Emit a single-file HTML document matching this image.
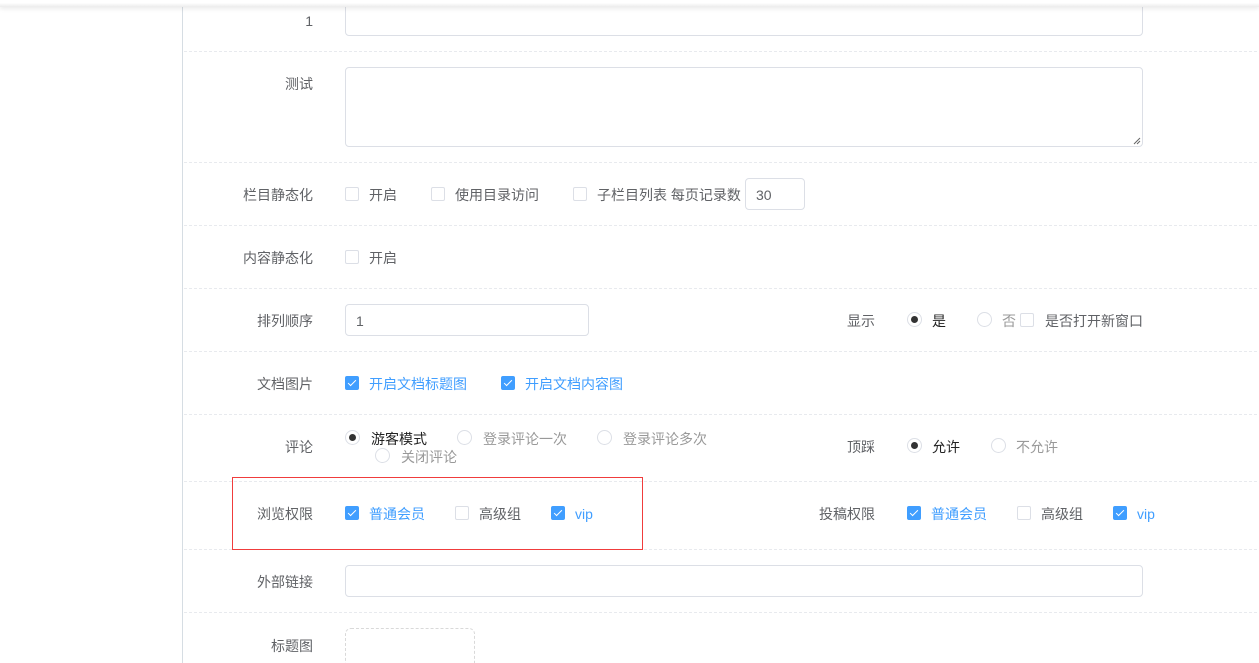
<!DOCTYPE html>
<html><head><meta charset="utf-8"><style>
*{margin:0;padding:0;box-sizing:border-box}
html,body{width:1259px;height:663px;overflow:hidden}
body{background:#fff;position:relative;font-family:"Liberation Sans","Noto Sans CJK SC",sans-serif;font-size:14px;color:#606266}
.a{position:absolute;white-space:nowrap;line-height:16px;margin-top:1px}
.lbl{position:absolute;right:946px;white-space:nowrap;line-height:16px;margin-top:1px;color:#606266}
.sep{position:absolute;left:184px;width:1073px;height:0;border-top:1px dashed #e8eaee}
.inp{position:absolute;border:1px solid #dcdfe6;border-radius:4px;background:#fff}
.cb{position:absolute;width:14px;height:14px;border:1px solid #dcdfe6;border-radius:2px;background:#fff}
.cb.on{background:#409eff;border-color:#409eff}
.cb.on::after{content:"";position:absolute;left:4px;top:1px;width:3px;height:7px;border:solid #fff;border-width:0 1px 1px 0;transform:rotate(45deg)}
.rd{position:absolute;width:15px;height:15px;border:1px solid #dcdfe6;border-radius:50%;background:#fff}
.rd.on::after{content:"";position:absolute;left:3px;top:3px;width:7px;height:7px;border-radius:50%;background:#333}
.blue{color:#409eff}.dark{color:#222}.gray{color:#999}
</style></head><body>
<div style="position:absolute;left:182px;top:7px;width:1px;height:656px;background:#d6dde3"></div>

<div class="inp" style="left:345px;top:-4px;width:798px;height:40px"></div>
<div class="lbl" style="top:12px">1</div>
<div class="sep" style="top:51px"></div>

<div class="lbl" style="top:75px">测试</div>
<div class="inp" style="left:345px;top:67px;width:798px;height:80px"></div>
<svg style="position:absolute;left:1133px;top:137px" width="8" height="8"><path d="M1 7L7 1M4 7L7 4" stroke="#666" stroke-width="1"/></svg>
<div class="sep" style="top:162px"></div>

<div class="lbl" style="top:186px">栏目静态化</div>
<div class="cb" style="left:345px;top:187px"></div><div class="a" style="left:369px;top:186px">开启</div>
<div class="cb" style="left:431px;top:187px"></div><div class="a" style="left:455px;top:186px">使用目录访问</div>
<div class="cb" style="left:573px;top:187px"></div><div class="a" style="left:597px;top:186px">子栏目列表 每页记录数</div>
<div class="inp" style="left:745px;top:178px;width:60px;height:32px"></div><div class="a" style="left:756px;top:186px">30</div>
<div class="sep" style="top:225px"></div>

<div class="lbl" style="top:249px">内容静态化</div>
<div class="cb" style="left:345px;top:250px"></div><div class="a" style="left:369px;top:249px">开启</div>
<div class="sep" style="top:288px"></div>

<div class="lbl" style="top:312px">排列顺序</div>
<div class="inp" style="left:345px;top:304px;width:244px;height:32px"></div><div class="a" style="left:356px;top:312px">1</div>
<div class="a" style="left:847px;top:312px">显示</div>
<div class="rd on" style="left:907px;top:312px"></div><div class="a dark" style="left:932px;top:312px">是</div>
<div class="rd" style="left:977px;top:312px"></div><div class="a gray" style="left:1002px;top:312px">否</div>
<div class="cb" style="left:1020px;top:313px"></div><div class="a" style="left:1045px;top:312px">是否打开新窗口</div>
<div class="sep" style="top:351px"></div>

<div class="lbl" style="top:375px">文档图片</div>
<div class="cb on" style="left:345px;top:376px"></div><div class="a blue" style="left:369px;top:375px">开启文档标题图</div>
<div class="cb on" style="left:501px;top:376px"></div><div class="a blue" style="left:525px;top:375px">开启文档内容图</div>
<div class="sep" style="top:414px"></div>

<div class="lbl" style="top:438px">评论</div>
<div class="rd on" style="left:345px;top:430px"></div><div class="a dark" style="left:371px;top:430px">游客模式</div>
<div class="rd" style="left:457px;top:430px"></div><div class="a gray" style="left:483px;top:430px">登录评论一次</div>
<div class="rd" style="left:597px;top:430px"></div><div class="a gray" style="left:623px;top:430px">登录评论多次</div>
<div class="rd" style="left:375px;top:448px"></div><div class="a gray" style="left:401px;top:448px">关闭评论</div>
<div class="a" style="left:847px;top:438px">顶踩</div>
<div class="rd on" style="left:907px;top:438px"></div><div class="a dark" style="left:932px;top:438px">允许</div>
<div class="rd" style="left:991px;top:438px"></div><div class="a gray" style="left:1016px;top:438px">不允许</div>
<div class="sep" style="top:481px"></div>

<div class="lbl" style="top:505px">浏览权限</div>
<div class="cb on" style="left:345px;top:506px"></div><div class="a blue" style="left:369px;top:505px">普通会员</div>
<div class="cb" style="left:455px;top:506px"></div><div class="a" style="left:479px;top:505px">高级组</div>
<div class="cb on" style="left:551px;top:506px"></div><div class="a blue" style="left:575px;top:505px">vip</div>
<div class="a" style="left:819px;top:505px">投稿权限</div>
<div class="cb on" style="left:907px;top:506px"></div><div class="a blue" style="left:931px;top:505px">普通会员</div>
<div class="cb" style="left:1017px;top:506px"></div><div class="a" style="left:1041px;top:505px">高级组</div>
<div class="cb on" style="left:1113px;top:506px"></div><div class="a blue" style="left:1137px;top:505px">vip</div>
<div class="sep" style="top:549px"></div>
<div style="position:absolute;left:232px;top:477px;width:411px;height:73px;border:1px solid #f03c3c;z-index:5"></div>

<div class="lbl" style="top:573px">外部链接</div>
<div class="inp" style="left:345px;top:565px;width:798px;height:32px"></div>
<div class="sep" style="top:612px"></div>

<div class="lbl" style="top:637px">标题图</div>
<div style="position:absolute;left:345px;top:628px;width:130px;height:60px;border:1px dashed #d9d9d9;border-radius:6px"></div>
<div style="position:absolute;left:0;top:0;width:1259px;height:7px;background:linear-gradient(#fff,#fff 40%,#ececec);box-shadow:0 2px 4px rgba(0,0,0,.08);z-index:10"></div>
</body></html>
